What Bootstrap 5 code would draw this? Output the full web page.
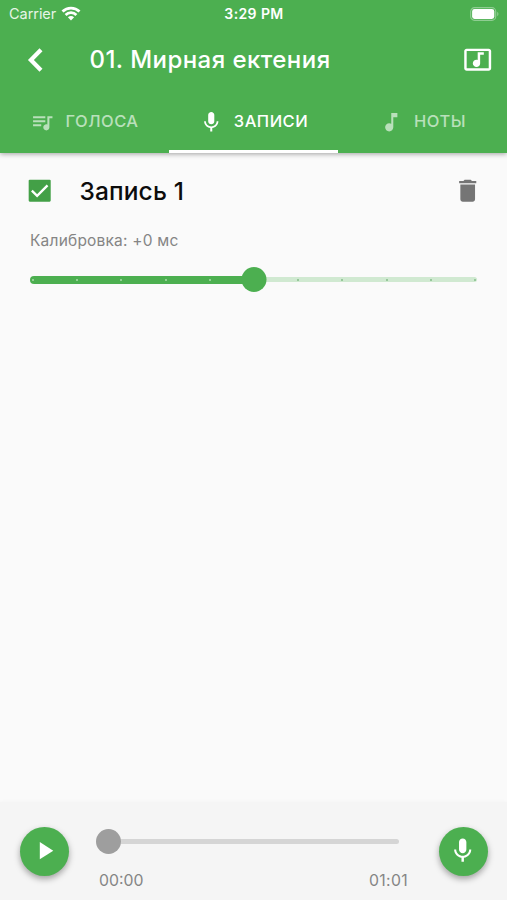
<!DOCTYPE html>
<html lang="ru">
<head>
<meta charset="utf-8">
<meta name="viewport" content="width=device-width, initial-scale=1">
<title>Мирная ектения</title>
<link href="https://cdn.jsdelivr.net/npm/bootstrap@5.3.0/dist/css/bootstrap.min.css" rel="stylesheet">
<style>
body{font-family:Inter,"Liberation Sans",sans-serif;background:#fafafa;height:900px;overflow:hidden;color:#111}
svg{display:block;flex:none;fill:currentColor}
.app-head{background:#4caf50;height:152.5px;box-shadow:0 1px 5px rgba(0,0,0,.36)}
.status{height:27px;padding:0 8px 0 9px;font-size:14.5px;line-height:27px}
.status>*{flex:1 1 0}
.carrier{letter-spacing:-.05px;color:#e6f5e7}
.wifi{margin-left:5px}
.clock{font-size:14px;font-weight:600;letter-spacing:.4px}
.title-bar{height:65px;padding:0 15px 0 26px}
.title{font-size:24px;font-weight:500;letter-spacing:.45px;margin-left:43.5px}
.tabs .nav-link{height:60.5px;color:#b9e0bb;font-size:16.5px;font-weight:500;letter-spacing:.5px;padding:2px 0 0;border-bottom:3px solid transparent;gap:10.5px}
.tabs .nav-link.active{color:#fff;border-color:#fff}
.record{padding:20px 30px 0 25px}
.rec-name{font-size:24.5px;font-weight:500;letter-spacing:.15px;margin-left:25px;color:#0c0c0c}
.trash{color:#757575;margin-right:-5px}
.calib{font-size:15.5px;color:#858585;margin:22px 0 0 5px;line-height:20px;letter-spacing:.2px}
.trackbar{height:25px}
.calib-bar{margin:16px 0 0 5px}
.on{height:7.5px;border-radius:4px;background:#4caf50;width:50%}
.off{height:5px;border-radius:0 3px 3px 0;background:#d0e9d1;width:50%}
.knob{width:25px;height:25px;border-radius:50%;background:#4caf50;left:50%;top:0;transform:translateX(-50%)}
.ticks{inset:0 1px 0 2px}
.ticks i{width:2px;height:2px;border-radius:50%;background:#a8dbaa}
.ticks i.dim{background:#85bd88}
.player{height:98px;background:#f5f5f5;padding:0 19.5px 0 20px;box-shadow:0 0 4px rgba(0,0,0,.035)}
.fab{width:49px;height:49px;background:#4caf50;color:#fff;margin-top:24.5px;box-shadow:0 3px 6px rgba(0,0,0,.34);flex:none}
.seek{margin:27px 30.5px 0 27px}
.seek .off{width:auto;flex:1;background:#d5d5d5;margin-right:9px}
.seek-knob{width:25px;height:25px;border-radius:50%;background:#9e9e9e}
.times{font-size:15.8px;color:#858585;line-height:20px;margin-top:17px;padding-left:3px}
.total{letter-spacing:.35px}
</style>
</head>
<body class="d-flex flex-column">
<svg width="0" height="0" class="position-absolute"><defs>
<path id="mic" d="M12 14c1.66 0 2.99-1.34 2.99-3L15 5c0-1.66-1.34-3-3-3S9 3.34 9 5v6c0 1.66 1.34 3 3 3zm5.3-3c0 3-2.54 5.1-5.3 5.1S6.7 14 6.7 11H5c0 3.41 2.72 6.23 6 6.72V21h2v-3.28c3.28-.48 6-3.3 6-6.72h-1.7z"/>
</defs></svg>
<header class="app-head text-white">
  <div class="status d-flex align-items-center">
    <div class="carrier d-flex align-items-center"><span>Carrier</span>
      <svg class="wifi" width="20" height="15" viewBox="0 0 20 15"><g fill="none" stroke="#fff" stroke-width="2.8"><path d="M1.5 5.5a12.2 12.2 0 0 1 17 0M4.6 8.9a7.7 7.7 0 0 1 10.8 0"/></g><path fill="#fff" d="M6.9 11.3a4.6 4.6 0 0 1 6.2 0L10 14.4z"/></svg>
    </div>
    <div class="clock text-center">3:29 PM</div>
    <div class="d-flex justify-content-end">
      <svg width="29" height="14" viewBox="0 0 29 14"><rect x=".7" y=".7" width="25" height="12.6" rx="3.8" fill="none" stroke="#8fcd92" stroke-width="1.2"/><rect x="2.1" y="2.1" width="22.2" height="9.8" rx="2.4"/><path d="M27.2 4.8v4.4c1.7-.9 1.7-3.5 0-4.4z" fill="#8fcd92"/></svg>
    </div>
  </div>
  <div class="title-bar d-flex align-items-center">
    <svg width="20" height="24" viewBox="0 0 20 24"><path d="M15 1.8 4.9 12 15 22.2" fill="none" stroke="#fff" stroke-width="4.2"/></svg>
    <div class="title flex-grow-1">01. Мирная ектения</div>
    <svg width="29.4" height="29.4" viewBox="0 0 24 24"><path d="M21 3H3c-1.1 0-2 .9-2 2v14c0 1.1.9 2 2 2h18c1.1 0 2-.9 2-2V5c0-1.1-.9-2-2-2zm0 16H3V5h18v14zM8 15c0-1.66 1.34-3 3-3 .35 0 .69.07 1 .18V6h5v2h-3v7.03c-.02 1.64-1.35 2.97-3 2.97-1.66 0-3-1.34-3-3z"/></svg>
  </div>
  <nav class="tabs nav nav-fill flex-nowrap">
    <a class="nav-link w-100 d-flex align-items-center justify-content-center" href="#"><svg width="24.5" height="24.5" viewBox="0 0 24 24"><path d="M15 6H3v2h12V6zm0 4H3v2h12v-2zM3 16h8v-2H3v2zM17 6v8.18c-.31-.11-.65-.18-1-.18-1.66 0-3 1.34-3 3s1.34 3 3 3 3-1.34 3-3V8h3V6h-5z"/></svg>ГОЛОСА</a>
    <a class="nav-link active w-100 d-flex align-items-center justify-content-center" href="#"><svg width="24.5" height="24.5" viewBox="0 0 24 24"><use href="#mic"/></svg>ЗАПИСИ</a>
    <a class="nav-link w-100 d-flex align-items-center justify-content-center" href="#"><svg width="24.5" height="24.5" viewBox="0 0 24 24"><path d="M12 3v10.55c-.59-.34-1.27-.55-2-.55-2.21 0-4 1.79-4 4s1.79 4 4 4 4-1.79 4-4V7h4V3h-6z"/></svg>НОТЫ</a>
  </nav>
</header>
<main class="record flex-grow-1">
  <div class="d-flex align-items-center">
    <svg width="29.4" height="29.4" viewBox="0 0 24 24" color="#43a047"><rect x="3" y="3" width="18" height="18" rx=".9"/><path d="m5.6 11.9 4.3 4.3 8.5-8.5" fill="none" stroke="#fff" stroke-width="1.9"/></svg>
    <div class="rec-name flex-grow-1">Запись 1</div>
    <svg class="trash" width="29.4" height="29.4" viewBox="0 0 24 24"><path d="M6 19c0 1.1.9 2 2 2h8c1.1 0 2-.9 2-2V7H6v12zM19 4h-3.5l-1-1h-5l-1 1H5v2h14V4z"/></svg>
  </div>
  <div class="calib">Калибровка: +0 мс</div>
  <div class="trackbar calib-bar d-flex align-items-center position-relative">
    <div class="on"></div><div class="off"></div>
    <div class="ticks position-absolute d-flex align-items-center justify-content-between"><i></i><i></i><i></i><i></i><i></i><i></i><i class="dim"></i><i class="dim"></i><i class="dim"></i><i class="dim"></i><i class="dim"></i></div>
    <div class="knob position-absolute"></div>
  </div>
</main>
<footer class="player d-flex">
  <div class="fab rounded-circle d-flex align-items-center justify-content-center"><svg width="29.4" height="29.4" viewBox="0 0 24 24"><path d="M8 5v14l11-7z"/></svg></div>
  <div class="seek flex-grow-1">
    <div class="trackbar d-flex align-items-center"><div class="seek-knob"></div><div class="off"></div></div>
    <div class="times d-flex justify-content-between"><span>00:00</span><span class="total">01:01</span></div>
  </div>
  <div class="fab rounded-circle d-flex align-items-center justify-content-center"><svg width="29.4" height="29.4" viewBox="0 0 24 24"><use href="#mic"/></svg></div>
</footer>
<script src="https://cdn.jsdelivr.net/npm/bootstrap@5.3.0/dist/js/bootstrap.bundle.min.js"></script>
</body>
</html>
